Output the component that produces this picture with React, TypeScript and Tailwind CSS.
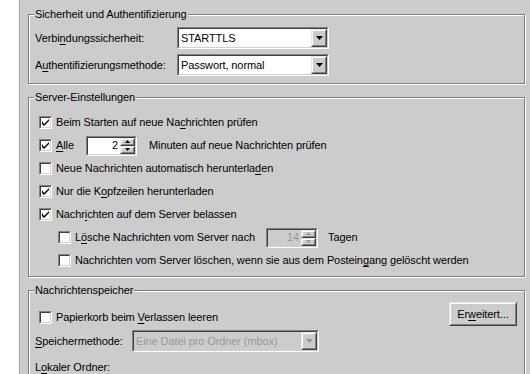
import React from "react";

const font = { fontFamily: '"Liberation Sans", Arial, sans-serif' };

function U({ children }: { children: React.ReactNode }) {
  return <span className="underline underline-offset-[2px]">{children}</span>;
}

function GroupBox({
  legend,
  className,
  children,
}: {
  legend: string;
  className?: string;
  children: React.ReactNode;
}) {
  return (
    <div
      className={
        "relative shrink-0 border border-[#808080] shadow-[inset_1px_1px_0_#fff,1px_1px_0_#fff] " +
        (className ?? "")
      }
    >
      <span className="absolute -top-[8px] left-[5px] bg-[#cccccc] px-[1px] leading-[14px]">
        {legend}
      </span>
      {children}
    </div>
  );
}

function Sunken({
  className,
  children,
}: {
  className?: string;
  children?: React.ReactNode;
}) {
  return (
    <div
      className={
        "shrink-0 border border-t-[#808080] border-l-[#808080] border-b-white border-r-white " +
        (className ?? "")
      }
    >
      <div className="h-full w-full border border-t-[#404040] border-l-[#404040] border-b-[#d4d0c8] border-r-[#d4d0c8]">
        {children}
      </div>
    </div>
  );
}

function Raised({
  className,
  children,
}: {
  className?: string;
  children?: React.ReactNode;
}) {
  return (
    <div
      className={
        "border border-t-[#e8e8e8] border-l-[#e8e8e8] border-b-[#404040] border-r-[#404040] " +
        (className ?? "")
      }
    >
      <div className="flex h-full w-full items-center justify-center border border-t-white border-l-white border-b-[#808080] border-r-[#808080] bg-[#cccccc]">
        {children}
      </div>
    </div>
  );
}

function Tri({ down = true, color = "#000", size = 7 }: { down?: boolean; color?: string; size?: number }) {
  const h = Math.ceil(size / 2);
  return (
    <svg width={size} height={h} viewBox={`0 0 ${size} ${h}`}>
      <polygon
        points={down ? `0,0 ${size},0 ${size / 2},${h}` : `0,${h} ${size},${h} ${size / 2},0`}
        fill={color}
      />
    </svg>
  );
}

function Select({
  value,
  className,
  disabled,
}: {
  value: string;
  className?: string;
  disabled?: boolean;
}) {
  return (
    <Sunken className={"h-[22px] " + (className ?? "")}>
      <div className={"flex h-full items-stretch " + (disabled ? "bg-[#cccccc]" : "bg-white")}>
        <div className={"flex flex-1 items-center pl-[2px] " + (disabled ? "text-[#999999]" : "")}>
          {value}
        </div>
        <Raised className="w-[16px]">
          <Tri color={disabled ? "#999999" : "#000"} />
        </Raised>
      </div>
    </Sunken>
  );
}

function Spin({
  value,
  className,
  disabled,
}: {
  value: string;
  className?: string;
  disabled?: boolean;
}) {
  return (
    <Sunken className={"h-[20px] " + (className ?? "")}>
      <div className={"flex h-full " + (disabled ? "bg-[#cccccc]" : "bg-white")}>
        <div
          className={
            "flex flex-1 items-center justify-end pr-[2px] " + (disabled ? "text-[#999999]" : "")
          }
        >
          {value}
        </div>
        <div className="flex w-[15px] flex-col">
          <Raised className="flex-1">
            <Tri down={false} size={5} color={disabled ? "#999999" : "#000"} />
          </Raised>
          <Raised className="flex-1">
            <Tri size={5} color={disabled ? "#999999" : "#000"} />
          </Raised>
        </div>
      </div>
    </Sunken>
  );
}

function Check({ checked }: { checked?: boolean }) {
  return (
    <Sunken className="h-[13px] w-[13px]">
      <div className="flex h-full w-full items-center justify-center bg-white">
        {checked && (
          <svg width="7" height="7" viewBox="0 0 7 7">
            <path d="M0 2 L0 5 L2 7 L7 2 L7 0 L2 5 Z" fill="#000" />
          </svg>
        )}
      </div>
    </Sunken>
  );
}

function CheckRow({
  checked,
  indent,
  children,
}: {
  checked?: boolean;
  indent?: boolean;
  children: React.ReactNode;
}) {
  return (
    <div className={"flex h-[23px] items-center gap-[4px] " + (indent ? "pl-[29px]" : "pl-[10px]")}>
      <Check checked={checked} />
      <div className="flex items-center">{children}</div>
    </div>
  );
}

export default function App() {
  return (
    <div
      className="flex h-[374px] w-[530px] overflow-hidden text-[11px] tracking-[-0.1px] text-black"
      style={font}
    >
      <div className="w-[20px] shrink-0 border-r border-[#a8a8a8] bg-white" />
      <div className="flex flex-1 flex-col gap-[13px] bg-[#cccccc] pl-[8px] pr-[5px] pt-[14px]">
        <GroupBox legend="Sicherheit und Authentifizierung" className="h-[70px]">
          <div className="flex flex-col gap-[5px] pl-[6px] pt-[12px]">
            <div className="flex items-center">
              <span className="w-[142px]">
                Verbi<U>n</U>dungssicherheit:
              </span>
              <Select value="STARTTLS" className="w-[152px]" />
            </div>
            <div className="flex items-center">
              <span className="w-[142px]">
                A<U>u</U>thentifizierungsmethode:
              </span>
              <Select value="Passwort, normal" className="w-[152px]" />
            </div>
          </div>
        </GroupBox>

        <GroupBox legend="Server-Einstellungen" className="h-[180px]">
          <div className="flex flex-col pt-[13px]">
            <CheckRow checked>
              Beim Starten auf neue Na<U>c</U>hrichten prüfen
            </CheckRow>
            <CheckRow checked>
              <span className="w-[30px]">
                <U>A</U>lle
              </span>
              <Spin value="2" className="w-[51px]" />
              <span className="pl-[12px]">Minuten auf neue Nachrichten prüfen</span>
            </CheckRow>
            <CheckRow>
              Neue Nachrichten automatisch herunterla<U>d</U>en
            </CheckRow>
            <CheckRow checked>
              Nur die K<U>o</U>pfzeilen herunterladen
            </CheckRow>
            <CheckRow checked>
              Nachr<U>i</U>chten auf dem Server belassen
            </CheckRow>
            <CheckRow indent>
              <span className="w-[191px]">
                L<U>ö</U>sche Nachrichten vom Server nach
              </span>
              <Spin value="14" className="w-[52px]" disabled />
              <span className="pl-[10px]">Tagen</span>
            </CheckRow>
            <CheckRow indent>
              Nachrichten vom Server löschen, wenn sie aus dem Postein<U>g</U>ang gelöscht werden
            </CheckRow>
          </div>
        </GroupBox>

        <GroupBox legend="Nachrichtenspeicher" className="h-[120px]">
          <div className="flex flex-col pt-[11px]">
            <div className="flex items-center justify-between pr-[7px]">
              <div className="mt-[6px] flex items-center gap-[4px] pl-[10px]">
                <Check />
                <span>
                  Papierkorb beim <U>V</U>erlassen leeren
                </span>
              </div>
              <Raised className="h-[24px] w-[68px]">
                <span>
                  Er<U>w</U>eitert...
                </span>
              </Raised>
            </div>
            <div className="mt-[4px] flex items-center pl-[6px]">
              <span className="w-[97px]">
                <U>S</U>peichermethode:
              </span>
              <Select value="Eine Datei pro Ordner (mbox)" className="w-[187px]" disabled />
            </div>
            <div className="mt-[7px] pl-[6px]">
              L<U>o</U>kaler Ordner:
            </div>
          </div>
        </GroupBox>
      </div>
    </div>
  );
}
